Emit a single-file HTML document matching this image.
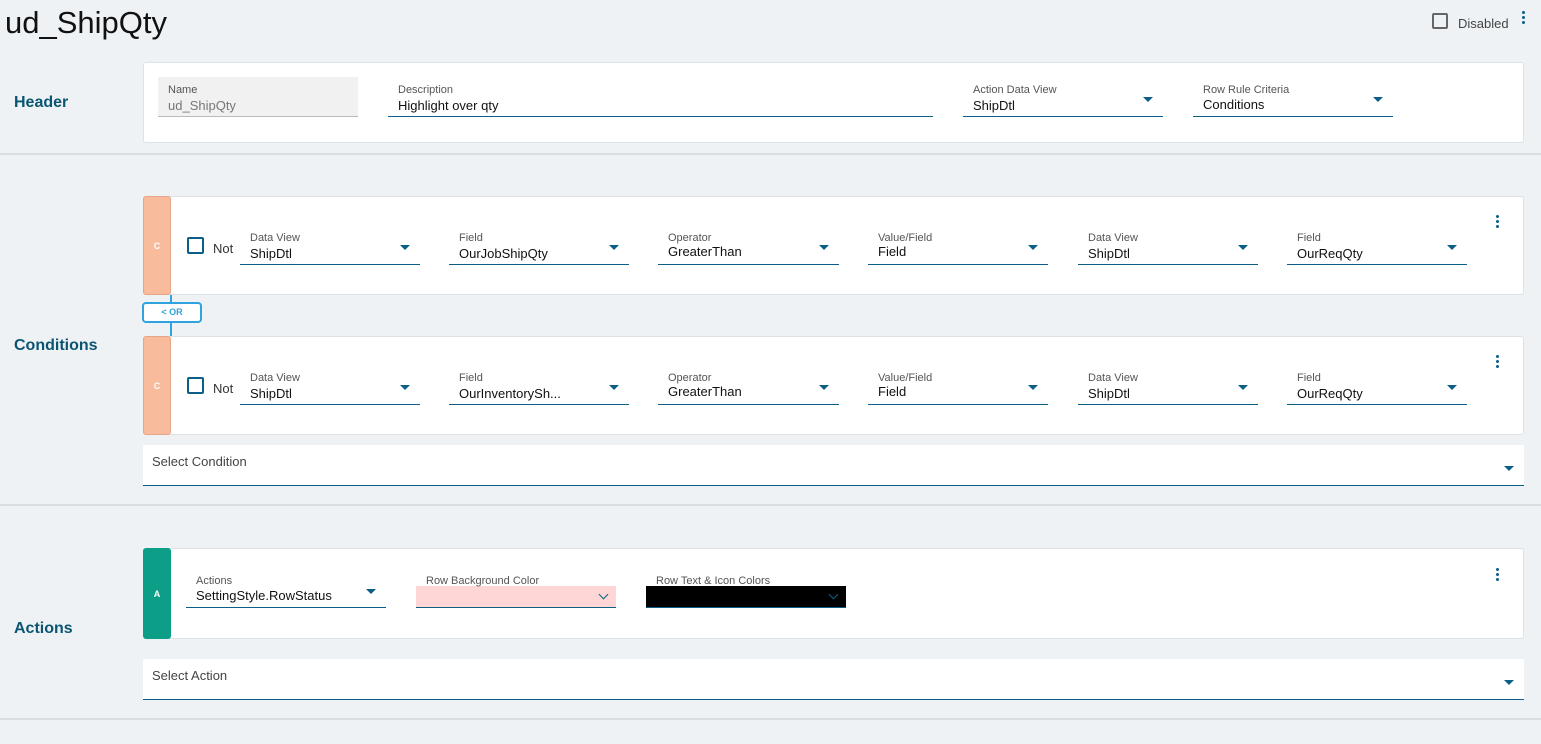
<!DOCTYPE html><html><head><style>
*{margin:0;padding:0;box-sizing:border-box}
body{width:1541px;height:744px;background:#eef2f5;font-family:"Liberation Sans",sans-serif;position:relative;overflow:hidden;color:#111}
.a{position:absolute}
.card{position:absolute;background:#fff;border:1px solid #dde2e6;border-radius:3px}
.sec{position:absolute;left:14px;font-weight:bold;font-size:16px;color:#0b5572}
.sep{position:absolute;left:0;width:1541px;height:2px;background:#d9dee3}
.f{position:absolute;border-bottom:1px solid #0b5f87;height:40px}
.f .l{position:absolute;left:10px;top:7px;font-size:11px;color:#555}
.f .v{position:absolute;left:10px;top:21px;font-size:13px;color:#111}
.f .t{position:absolute;right:10px;top:20px;width:0;height:0;border-left:5px solid transparent;border-right:5px solid transparent;border-top:5px solid #0b5f87}
.keb{position:absolute;width:3px}
.keb i{display:block;width:3px;height:3px;border-radius:50%;background:#0b5f87;margin-bottom:2px}
.tag{position:absolute;left:143px;width:28px;border-radius:3px;color:#fff;font-size:9px;font-weight:bold;display:flex;align-items:center;justify-content:center}
.cb{position:absolute;width:17px;height:17px;border:2px solid #0b5f87;border-radius:2px}
.chev{position:absolute;right:9px;top:5px;width:7px;height:7px;border-right:1.5px solid #0b5f87;border-bottom:1.5px solid #0b5f87;transform:rotate(45deg)}
</style></head><body>
<div class="a" style="left:5px;top:5px;font-size:31px;color:#111">ud_ShipQty</div>
<div class="cb" style="left:1432px;top:13px;border-color:#666;width:16px;height:16px"></div>
<div class="a" style="left:1458px;top:16px;font-size:13px;color:#444">Disabled</div>
<div class="keb" style="left:1522px;top:11px"><i></i><i></i><i></i></div>

<div class="sec" style="top:94px">Header</div>
<div class="card" style="left:143px;top:62px;width:1381px;height:81px"></div>
<div class="f" style="left:158px;top:77px;width:200px;background:#f1f1f1;border-color:#bbb"><div class="l">Name</div><div class="v" style="color:#777">ud_ShipQty</div></div>
<div class="f" style="left:388px;top:77px;width:545px"><div class="l">Description</div><div class="v">Highlight over qty</div></div>
<div class="f" style="left:963px;top:77px;width:200px"><div class="l">Action Data View</div><div class="v">ShipDtl</div><div class="t"></div></div>
<div class="f" style="left:1193px;top:77px;width:200px"><div class="l">Row Rule Criteria</div><div class="v" style="top:20px">Conditions</div><div class="t" style="top:20px"></div></div>
<div class="sep" style="top:153px"></div>

<div class="sec" style="top:337px">Conditions</div>
<div class="a" style="left:170px;top:294px;width:2px;height:42px;background:#2ea3e0"></div>
<div class="a" style="left:142px;top:302px;width:60px;height:21px;border:2px solid #2ea3e0;border-radius:4px;background:#fff;font-size:9px;font-weight:bold;color:#2ea3e0;text-align:center;line-height:17px">&lt; OR</div>

<div class="card" style="left:143px;top:196px;width:1381px;height:99px"></div>
<div class="tag" style="top:196px;height:99px;background:#f8bc9c;border:1px solid #e8a585">C</div>
<div class="cb" style="left:187px;top:237px"></div>
<div class="a" style="left:213px;top:241px;font-size:13px;color:#333">Not</div>
<div class="f" style="left:240px;top:225px;width:180px"><div class="l">Data View</div><div class="v">ShipDtl</div><div class="t"></div></div>
<div class="f" style="left:449px;top:225px;width:180px"><div class="l">Field</div><div class="v">OurJobShipQty</div><div class="t"></div></div>
<div class="f" style="left:658px;top:225px;width:181px"><div class="l">Operator</div><div class="v" style="top:19px">GreaterThan</div><div class="t"></div></div>
<div class="f" style="left:868px;top:225px;width:180px"><div class="l">Value/Field</div><div class="v" style="top:19px">Field</div><div class="t"></div></div>
<div class="f" style="left:1078px;top:225px;width:180px"><div class="l">Data View</div><div class="v">ShipDtl</div><div class="t"></div></div>
<div class="f" style="left:1287px;top:225px;width:180px"><div class="l">Field</div><div class="v">OurReqQty</div><div class="t"></div></div>
<div class="keb" style="left:1496px;top:215px"><i></i><i></i><i></i></div>

<div class="card" style="left:143px;top:336px;width:1381px;height:99px"></div>
<div class="tag" style="top:336px;height:99px;background:#f8bc9c;border:1px solid #e8a585">C</div>
<div class="cb" style="left:187px;top:377px"></div>
<div class="a" style="left:213px;top:381px;font-size:13px;color:#333">Not</div>
<div class="f" style="left:240px;top:365px;width:180px"><div class="l">Data View</div><div class="v">ShipDtl</div><div class="t"></div></div>
<div class="f" style="left:449px;top:365px;width:180px"><div class="l">Field</div><div class="v">OurInventorySh...</div><div class="t"></div></div>
<div class="f" style="left:658px;top:365px;width:181px"><div class="l">Operator</div><div class="v" style="top:19px">GreaterThan</div><div class="t"></div></div>
<div class="f" style="left:868px;top:365px;width:180px"><div class="l">Value/Field</div><div class="v" style="top:19px">Field</div><div class="t"></div></div>
<div class="f" style="left:1078px;top:365px;width:180px"><div class="l">Data View</div><div class="v">ShipDtl</div><div class="t"></div></div>
<div class="f" style="left:1287px;top:365px;width:180px"><div class="l">Field</div><div class="v">OurReqQty</div><div class="t"></div></div>
<div class="keb" style="left:1496px;top:355px"><i></i><i></i><i></i></div>

<div class="a" style="left:143px;top:445px;width:1381px;height:41px;background:#fff;border-bottom:1px solid #0b5f87"></div>
<div class="a" style="left:152px;top:454px;font-size:13px;color:#444">Select Condition</div>
<div class="a" style="left:1504px;top:466px;border-left:5px solid transparent;border-right:5px solid transparent;border-top:5px solid #0b5f87"></div>
<div class="sep" style="top:504px"></div>

<div class="sec" style="top:620px">Actions</div>
<div class="card" style="left:143px;top:548px;width:1381px;height:91px"></div>
<div class="tag" style="top:548px;height:91px;background:#0d9e87">A</div>
<div class="f" style="left:186px;top:568px;width:200px"><div class="l">Actions</div><div class="v" style="top:20px">SettingStyle.RowStatus</div><div class="t" style="top:21px"></div></div>
<div class="a" style="left:416px;top:586px;width:200px;height:21px;background:#ffd6d6"><div class="chev"></div></div>
<div class="f" style="left:416px;top:568px;width:200px"><div class="l">Row Background Color</div></div>
<div class="a" style="left:646px;top:586px;width:200px;height:21px;background:#000"><div class="chev"></div></div>
<div class="f" style="left:646px;top:568px;width:200px"><div class="l">Row Text &amp; Icon Colors</div></div>
<div class="keb" style="left:1496px;top:568px"><i></i><i></i><i></i></div>

<div class="a" style="left:143px;top:659px;width:1381px;height:41px;background:#fff;border-bottom:1px solid #0b5f87"></div>
<div class="a" style="left:152px;top:668px;font-size:13px;color:#444">Select Action</div>
<div class="a" style="left:1504px;top:680px;border-left:5px solid transparent;border-right:5px solid transparent;border-top:5px solid #0b5f87"></div>
<div class="sep" style="top:718px"></div>
</body></html>
